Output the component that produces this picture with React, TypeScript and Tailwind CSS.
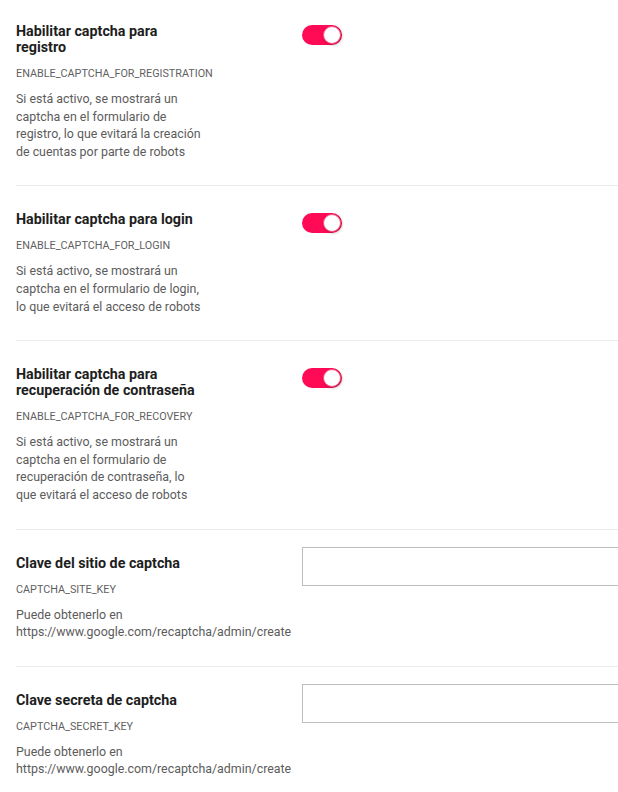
import React from "react";

type Item = {
  title: string[];
  keyName: string;
  desc: string[];
  kind: "toggle" | "input";
};

const URL = "https://www.google.com/recaptcha/admin/create";

const items: Item[] = [
  {
    title: ["Habilitar captcha para", "registro"],
    keyName: "ENABLE_CAPTCHA_FOR_REGISTRATION",
    desc: [
      "Si está activo, se mostrará un",
      "captcha en el formulario de",
      "registro, lo que evitará la creación",
      "de cuentas por parte de robots",
    ],
    kind: "toggle",
  },
  {
    title: ["Habilitar captcha para login"],
    keyName: "ENABLE_CAPTCHA_FOR_LOGIN",
    desc: [
      "Si está activo, se mostrará un",
      "captcha en el formulario de login,",
      "lo que evitará el acceso de robots",
    ],
    kind: "toggle",
  },
  {
    title: ["Habilitar captcha para", "recuperación de contraseña"],
    keyName: "ENABLE_CAPTCHA_FOR_RECOVERY",
    desc: [
      "Si está activo, se mostrará un",
      "captcha en el formulario de",
      "recuperación de contraseña, lo",
      "que evitará el acceso de robots",
    ],
    kind: "toggle",
  },
  {
    title: ["Clave del sitio de captcha"],
    keyName: "CAPTCHA_SITE_KEY",
    desc: ["Puede obtenerlo en", URL],
    kind: "input",
  },
  {
    title: ["Clave secreta de captcha"],
    keyName: "CAPTCHA_SECRET_KEY",
    desc: ["Puede obtenerlo en", URL],
    kind: "input",
  },
];

function Toggle() {
  return (
    <div className="relative mt-[2px] h-[20px] w-[40px] rounded-full bg-[#ff0a55]">
      <div className="absolute right-[1px] top-[1px] h-[18px] w-[18px] rounded-full border border-[#ff4d80] bg-white shadow-[1px_1px_3px_rgba(0,0,0,0.3)]" />
    </div>
  );
}

export default function App() {
  return (
    <div className="h-[792px] w-[618px] overflow-hidden bg-white" style={{ fontFamily: "Roboto, sans-serif" }}>
      <div className="w-[900px] pl-4">
        {items.map((it, i) => (
          <div
            key={i}
            className={
              "flex border-[#ebebeb] pb-[25px] " +
              (i === 0 ? "pt-[23px] " : "pt-[25px] ") +
              (i < items.length - 1 ? "border-b" : "")
            }
          >
            <div className="w-[197px] shrink-0 whitespace-nowrap">
              <div className="text-[14.3px] font-bold leading-[16px] text-[#1e1e1e]">
                {it.title.map((t, j) => (
                  <div key={j}>{t}</div>
                ))}
              </div>
              <div className="mt-[12px] text-[10.8px] leading-[14px] text-[#5f5f5f]">{it.keyName}</div>
              <div className="mt-[9px] text-[12.4px] leading-[17.6px] text-[#5c5c5c]">
                {it.desc.map((t, j) => (
                  <div key={j}>{t}</div>
                ))}
              </div>
            </div>
            <div className="ml-[89px] flex-1">
              {it.kind === "toggle" ? (
                <Toggle />
              ) : (
                <input
                  type="text"
                  className="-mt-[8px] block h-[39px] w-[420px] border border-[#bdbdbd] bg-white outline-none"
                />
              )}
            </div>
          </div>
        ))}
      </div>
    </div>
  );
}
